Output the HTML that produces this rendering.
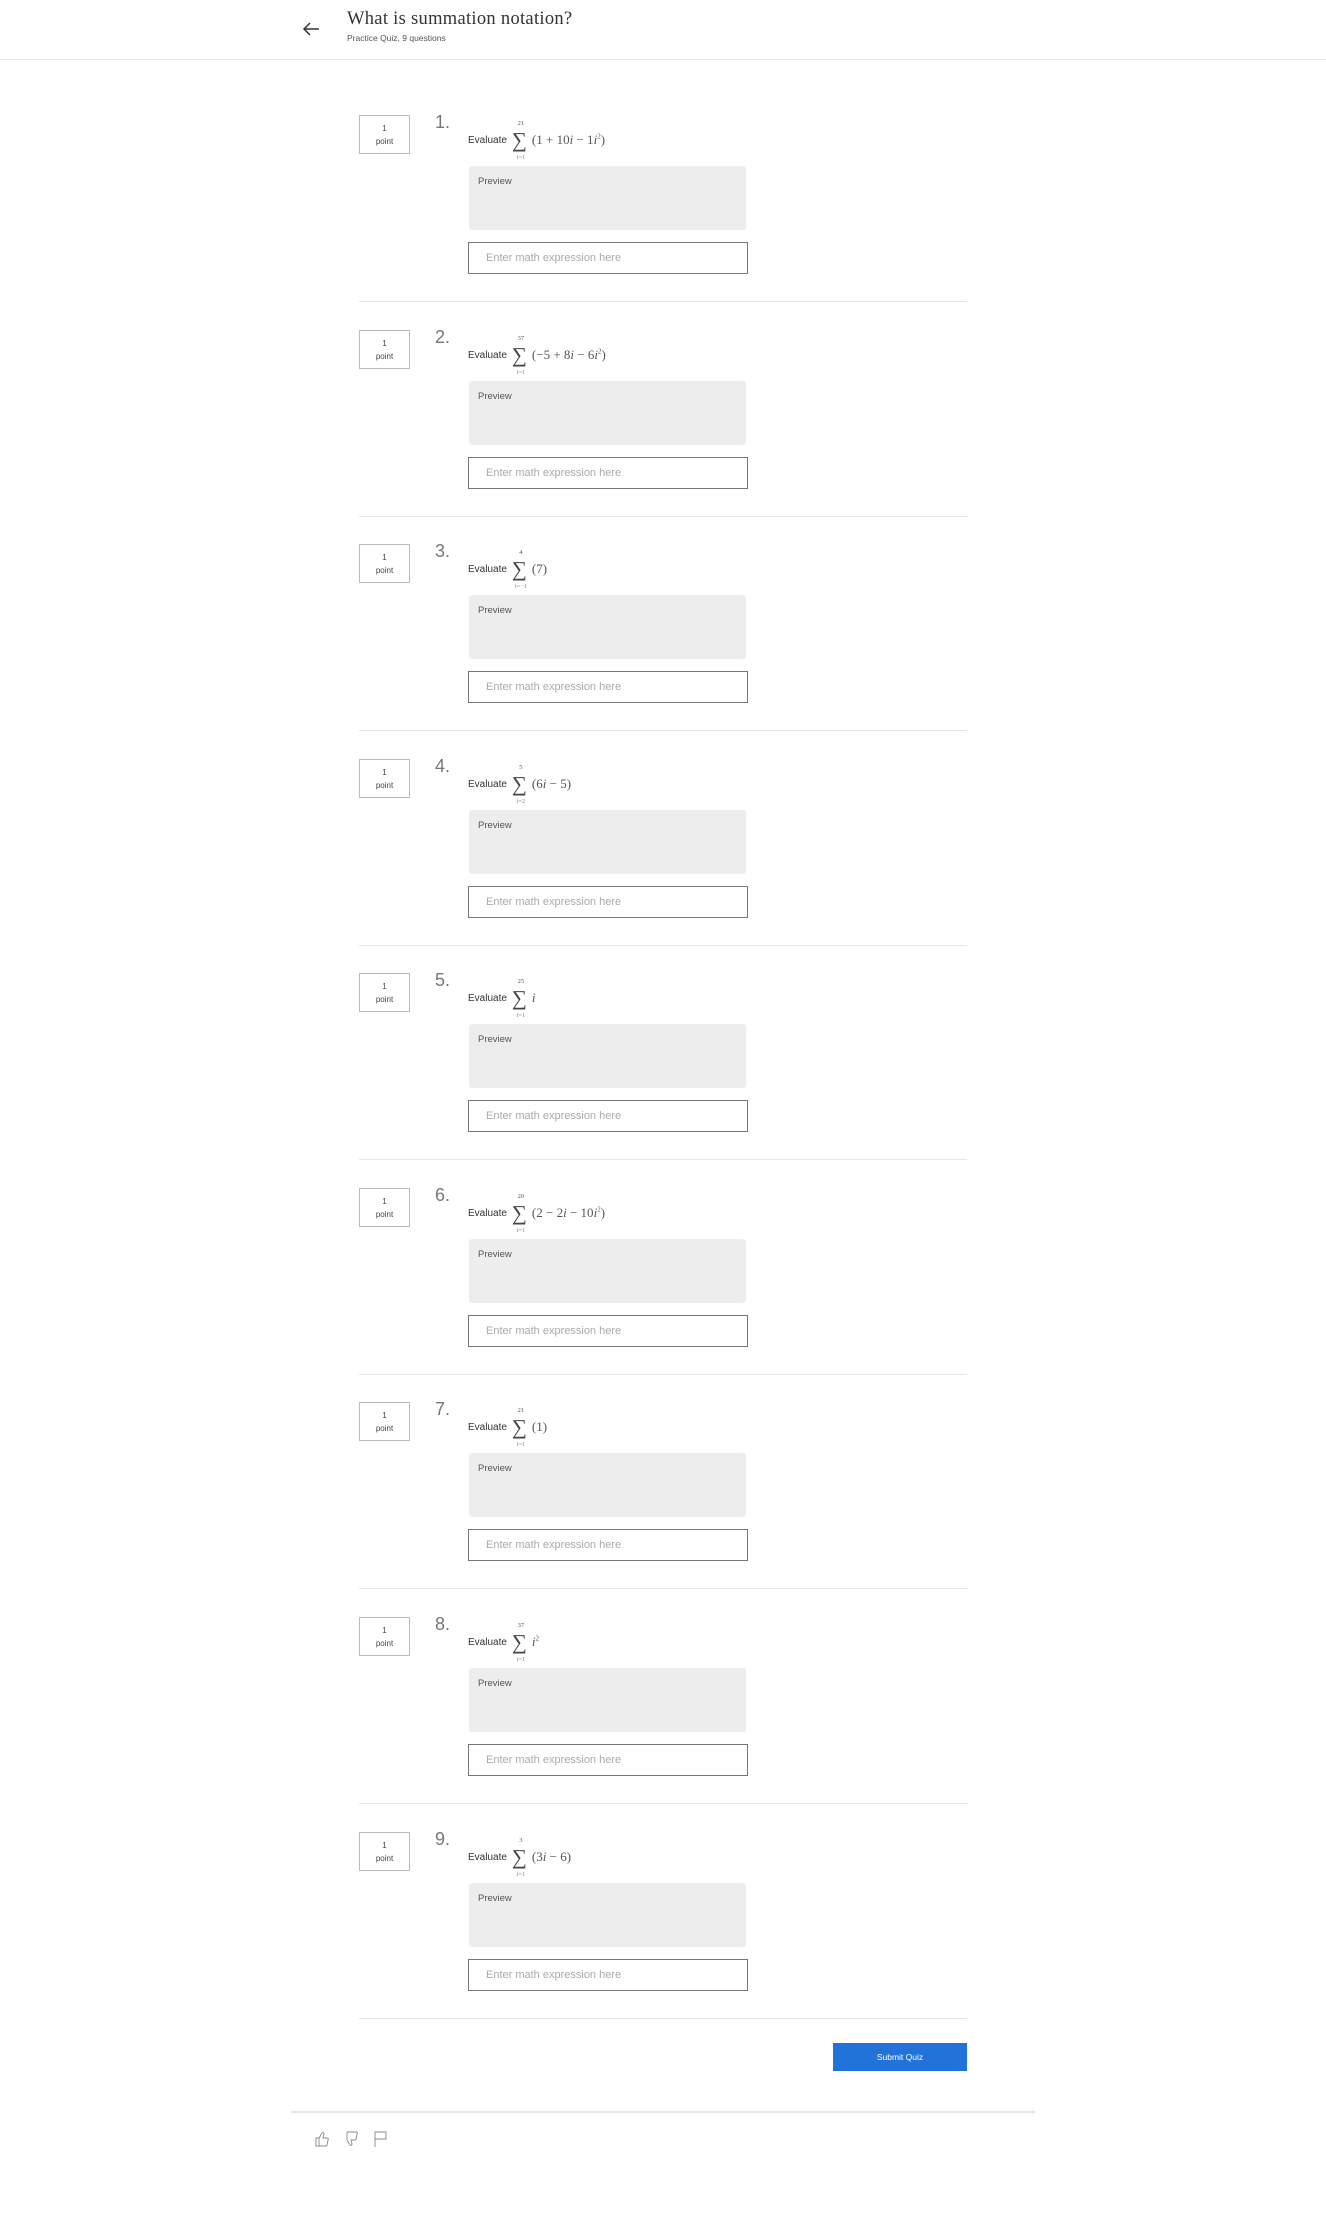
<!DOCTYPE html>
<html><head><meta charset="utf-8"><style>
body{margin:0;width:1326px;height:2213px;background:#fff;position:relative;font-family:"Liberation Sans",sans-serif;overflow:hidden}
.hdr{position:absolute;left:0;top:0;width:1326px;height:59px;border-bottom:1px solid #e6e6e6}
.title{position:absolute;left:347px;top:9px;font-family:"Liberation Serif",serif;font-size:18.5px;color:#333;letter-spacing:0.3px}
.sub{position:absolute;left:347px;top:33px;font-size:8.5px;color:#555}
.q{position:absolute;left:0;width:1326px;height:215px}
.pt{position:absolute;left:359px;top:0;border:1px solid #bbb;font-size:8px;color:#444;text-align:center;line-height:13px;padding-top:6px;box-sizing:border-box;height:39px;width:51px}
.num{position:absolute;left:435px;top:-3px;font-size:18px;color:#777;font-weight:300}
.ev{position:absolute;left:468px;top:10px;height:30px;font-size:10px;color:#333;display:flex;align-items:center;white-space:nowrap}
.sig{display:inline-block;position:relative;width:18px;height:30px;margin:0 2px 0 5px;font-family:"Liberation Serif",serif}
.sig .s{position:absolute;left:0;top:5px;font-size:21px;line-height:21px;color:#444}
.sig .u{position:absolute;left:0;width:18px;text-align:center;top:-5px;font-size:6.5px;color:#555}
.sig .l{position:absolute;left:0;width:18px;text-align:center;top:29px;font-size:6.5px;color:#888}
.ex{font-family:"Liberation Serif",serif;font-size:13px;color:#555}
.pv{position:absolute;left:469px;top:51px;width:277px;height:64px;background:#ededed;border-radius:3px;font-size:9.5px;color:#555;padding:10px 0 0 9px;box-sizing:border-box}
.in{position:absolute;left:468px;top:127px;width:280px;height:32px;border:1.5px solid #777;box-sizing:border-box;font-size:11px;color:#aaa;padding:9px 0 0 17px}
.dv{position:absolute;left:359px;top:186px;width:608px;height:1px;background:#e6e6e6}
.btn{position:absolute;left:833px;top:2043px;width:134px;height:28px;background:#2173d9;color:#fff;font-size:8.5px;text-align:center;line-height:28px}
.fl{position:absolute;left:291px;top:2111px;width:744px;height:2px;background:#e6e6e6}
</style></head><body>
<div class="hdr"></div>
<svg style="position:absolute;left:302px;top:21px" width="18" height="16" viewBox="0 0 18 16"><path d="M17 8H2M8 2L2 8l6 6" fill="none" stroke="#333" stroke-width="1.5"/></svg>
<div class="title">What is summation notation?</div>
<div class="sub">Practice Quiz, 9 questions</div>

<div class="q" style="top:115px"><div class="pt">1<br>point</div><div class="num">1.</div><div class="ev">Evaluate<span class="sig"><span class="u">21</span><span class="s">∑</span><span class="l">i=1</span></span><span class="ex">(1 + 10<i>i</i> − 1<i>i</i><sup style="font-size:7px">2</sup>)</span></div><div class="pv">Preview</div><div class="in">Enter math expression here</div><div class="dv"></div></div>
<div class="q" style="top:330px"><div class="pt">1<br>point</div><div class="num">2.</div><div class="ev">Evaluate<span class="sig"><span class="u">37</span><span class="s">∑</span><span class="l">i=1</span></span><span class="ex">(−5 + 8<i>i</i> − 6<i>i</i><sup style="font-size:7px">2</sup>)</span></div><div class="pv">Preview</div><div class="in">Enter math expression here</div><div class="dv"></div></div>
<div class="q" style="top:544px"><div class="pt">1<br>point</div><div class="num">3.</div><div class="ev">Evaluate<span class="sig"><span class="u">4</span><span class="s">∑</span><span class="l">i=−1</span></span><span class="ex">(7)</span></div><div class="pv">Preview</div><div class="in">Enter math expression here</div><div class="dv"></div></div>
<div class="q" style="top:759px"><div class="pt">1<br>point</div><div class="num">4.</div><div class="ev">Evaluate<span class="sig"><span class="u">5</span><span class="s">∑</span><span class="l">i=2</span></span><span class="ex">(6<i>i</i> − 5)</span></div><div class="pv">Preview</div><div class="in">Enter math expression here</div><div class="dv"></div></div>
<div class="q" style="top:973px"><div class="pt">1<br>point</div><div class="num">5.</div><div class="ev">Evaluate<span class="sig"><span class="u">25</span><span class="s">∑</span><span class="l">i=1</span></span><span class="ex"><i>i</i></span></div><div class="pv">Preview</div><div class="in">Enter math expression here</div><div class="dv"></div></div>
<div class="q" style="top:1188px"><div class="pt">1<br>point</div><div class="num">6.</div><div class="ev">Evaluate<span class="sig"><span class="u">20</span><span class="s">∑</span><span class="l">i=1</span></span><span class="ex">(2 − 2<i>i</i> − 10<i>i</i><sup style="font-size:7px">2</sup>)</span></div><div class="pv">Preview</div><div class="in">Enter math expression here</div><div class="dv"></div></div>
<div class="q" style="top:1402px"><div class="pt">1<br>point</div><div class="num">7.</div><div class="ev">Evaluate<span class="sig"><span class="u">21</span><span class="s">∑</span><span class="l">i=1</span></span><span class="ex">(1)</span></div><div class="pv">Preview</div><div class="in">Enter math expression here</div><div class="dv"></div></div>
<div class="q" style="top:1617px"><div class="pt">1<br>point</div><div class="num">8.</div><div class="ev">Evaluate<span class="sig"><span class="u">37</span><span class="s">∑</span><span class="l">i=1</span></span><span class="ex"><i>i</i><sup style="font-size:7px">2</sup></span></div><div class="pv">Preview</div><div class="in">Enter math expression here</div><div class="dv"></div></div>
<div class="q" style="top:1832px"><div class="pt">1<br>point</div><div class="num">9.</div><div class="ev">Evaluate<span class="sig"><span class="u">3</span><span class="s">∑</span><span class="l">i=1</span></span><span class="ex">(3<i>i</i> − 6)</span></div><div class="pv">Preview</div><div class="in">Enter math expression here</div><div class="dv"></div></div>

<div class="btn">Submit Quiz</div>
<div class="fl"></div>
<svg style="position:absolute;left:313px;top:2130px" width="80" height="18" viewBox="0 0 80 18" fill="none" stroke="#888" stroke-width="0.9">
<path d="M3 8h3v8H3zM6 8l3-5c1-1 2 0 2 1l-1 4h4c1 0 2 1 1 2l-1 5c0 1-1 1-2 1H6"/>
<path d="M34 2h9c1 0 2 1 1 2l-1 5c0 1-1 1-2 1h-3l1 4c0 1-1 2-2 1l-3-5M34 2v8"/>
<path d="M62 17V2h11v7H62"/>
</svg>
</body></html>
